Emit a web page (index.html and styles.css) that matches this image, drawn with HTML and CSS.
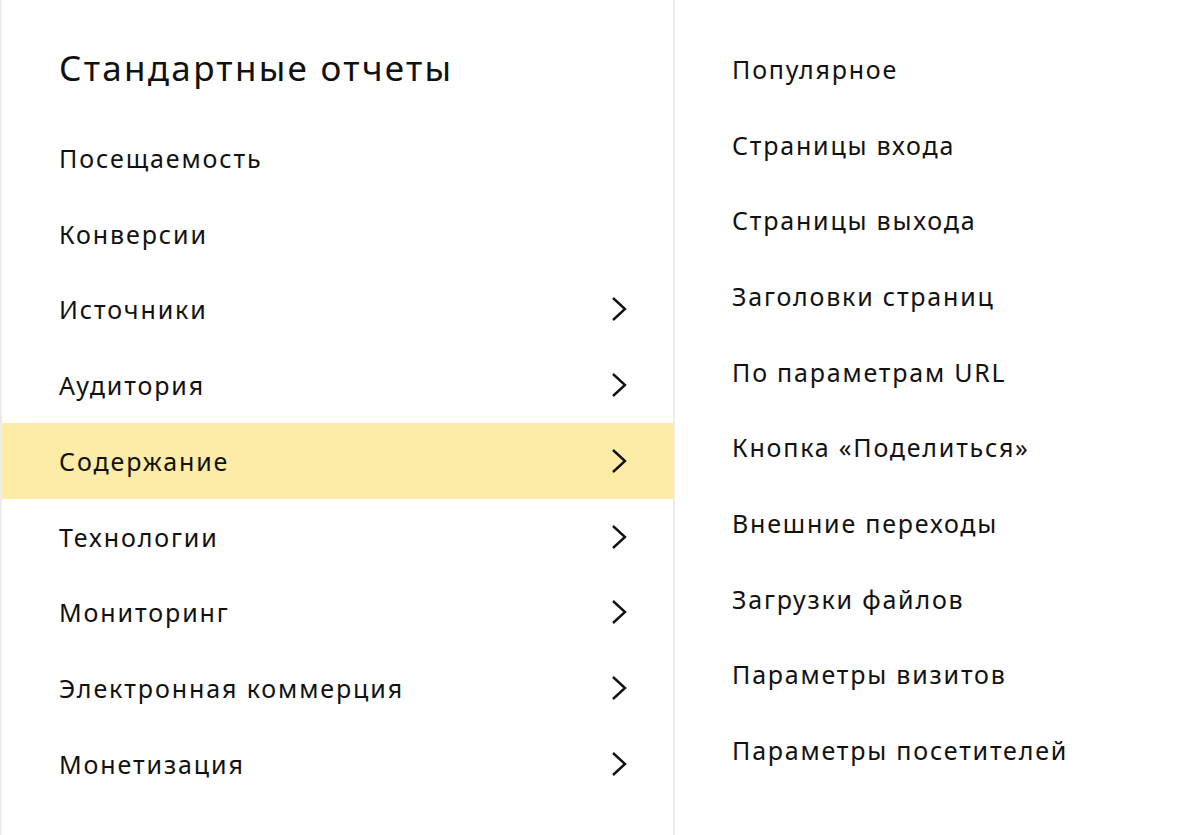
FILE: index.html
```html
<!DOCTYPE html>
<html lang="ru">
<head>
<meta charset="utf-8">
<title>Стандартные отчеты</title>
<link rel="stylesheet" href="styles.css">
</head>
<body>
<div class="page">
  <nav class="menu">
    <h1 class="menu-title">Стандартные отчеты</h1>
    <ul class="menu-list">
      <li class="menu-item"><span>Посещаемость</span></li>
      <li class="menu-item"><span>Конверсии</span></li>
      <li class="menu-item"><span>Источники</span><svg class="chev" viewBox="0 0 16 26"><path d="M2 2 L14 13 L2 24"/></svg></li>
      <li class="menu-item"><span>Аудитория</span><svg class="chev" viewBox="0 0 16 26"><path d="M2 2 L14 13 L2 24"/></svg></li>
      <li class="menu-item active"><span>Содержание</span><svg class="chev" viewBox="0 0 16 26"><path d="M2 2 L14 13 L2 24"/></svg></li>
      <li class="menu-item"><span>Технологии</span><svg class="chev" viewBox="0 0 16 26"><path d="M2 2 L14 13 L2 24"/></svg></li>
      <li class="menu-item"><span>Мониторинг</span><svg class="chev" viewBox="0 0 16 26"><path d="M2 2 L14 13 L2 24"/></svg></li>
      <li class="menu-item"><span>Электронная коммерция</span><svg class="chev" viewBox="0 0 16 26"><path d="M2 2 L14 13 L2 24"/></svg></li>
      <li class="menu-item"><span>Монетизация</span><svg class="chev" viewBox="0 0 16 26"><path d="M2 2 L14 13 L2 24"/></svg></li>
    </ul>
  </nav>
  <ul class="sub-list">
    <li class="sub-item">Популярное</li>
    <li class="sub-item">Страницы входа</li>
    <li class="sub-item">Страницы выхода</li>
    <li class="sub-item">Заголовки страниц</li>
    <li class="sub-item">По параметрам URL</li>
    <li class="sub-item">Кнопка «Поделиться»</li>
    <li class="sub-item">Внешние переходы</li>
    <li class="sub-item">Загрузки файлов</li>
    <li class="sub-item">Параметры визитов</li>
    <li class="sub-item">Параметры посетителей</li>
  </ul>
</div>
</body>
</html>
```

FILE: styles.css
```css
* { box-sizing: border-box; }
html, body { margin: 0; padding: 0; background: #fff; }
body {
  font-family: "Noto Sans", "Open Sans", sans-serif;
  color: #111;
  width: 1200px;
  height: 835px;
  overflow: hidden;
}
.page {
  display: flex;
  height: 835px;
}
.menu {
  width: 675px;
  flex: none;
  border-left: 2px solid #ececec;
  border-right: 2px solid #ececec;
  padding-top: 46px;
}
.menu-title {
  margin: 0 0 30px 57px;
  font-weight: 400;
  font-size: 35px;
  line-height: 44px;
  height: 44px;
  letter-spacing: 2.3px;
}
.menu-list, .sub-list {
  list-style: none;
  margin: 0;
  padding: 0;
}
.menu-item {
  height: 75.75px;
  display: flex;
  align-items: center;
  justify-content: space-between;
  padding: 0 46px 0 57px;
  font-size: 25px;
  letter-spacing: 1.9px;
}
.menu-item.active { background: #fdeca7; }
.chev {
  width: 16px;
  height: 26px;
  fill: none;
  stroke: #111;
  stroke-width: 2.4;
}
.sub-list {
  padding-top: 31px;
  padding-left: 57px;
}
.sub-item {
  height: 75.7px;
  display: flex;
  align-items: center;
  font-size: 25px;
  letter-spacing: 1.8px;
}
```
